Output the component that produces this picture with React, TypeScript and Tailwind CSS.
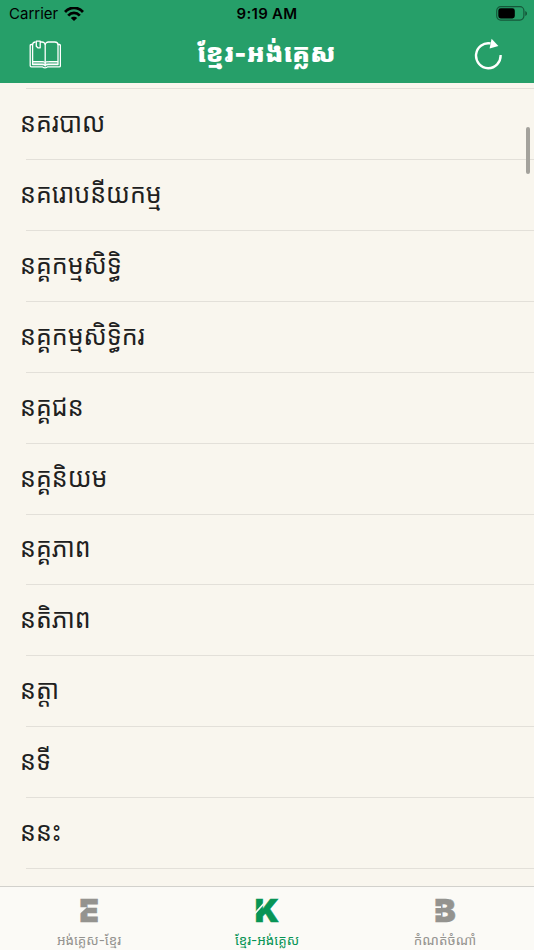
const words = [
    "នគរបាល",
    "នគរោបនីយកម្ម",
    "នគ្គកម្មសិទ្ធិ",
    "នគ្គកម្មសិទ្ធិករ",
    "នគ្គជន",
    "នគ្គនិយម",
    "នគ្គភាព",
    "នតិភាព",
    "នត្តា",
    "នទី",
    "ននះ",
];

function WifiIcon() {
    return (
        <svg className="ml-[6px] h-[15px] w-5" viewBox="0 0 20 15" fill="none" stroke="#000" strokeWidth="2.8">
            <path d="M1 5C6-.5 14-.5 19 5" />
            <path d="M4.2 8.6C7.5 5 12.5 5 15.8 8.6" />
            <path d="M10 14 6.8 10.9C8.4 9.2 11.6 9.2 13.2 10.9Z" fill="#000" stroke="none" />
        </svg>
    );
}

function BatteryIcon() {
    return (
        <svg className="relative -top-px h-[15px] w-8" viewBox="0 0 32 15">
            <rect x="0.7" y="0.7" width="27.2" height="13.4" rx="4" fill="none" stroke="#000" strokeOpacity="0.45" strokeWidth="1.2" />
            <rect x="2.3" y="2.3" width="16.5" height="10.2" rx="2.4" />
            <path d="M29.3 5v5c2.2-.8 2.2-4.2 0-5Z" fillOpacity="0.5" />
        </svg>
    );
}

function BookIcon() {
    return (
        <svg className="relative top-[2px] h-[30px] w-8" viewBox="0 0 32 30" fill="none" stroke="#fff" strokeWidth="1.3" strokeLinejoin="round">
            <path d="M4 21h11l1 2 1-2h12v3.5H4Z" fill="#fff" fillOpacity="0.45" stroke="none" />
            <path d="M3.5 4.5H2.3Q1.2 4.5 1.2 5.7v20Q1.2 26.8 2.3 26.8H13.5c.6 1.3 4.4 1.3 5 0H30.3Q31.4 26.8 31.4 25.7v-20Q31.4 4.5 30.3 4.5H29" />
            <path d="M6.6 2C4.6 2 3.6 3 3.6 5v19.5H13c1.6 0 3.2.5 3.2 1.5V5c0-2-1.7-3-3.2-3h-2" />
            <path d="M16.2 5c0-2 1.7-3 3.2-3h6.4c2 0 3.2 1 3.2 3v19.5H19.4c-1.6 0-3.2.5-3.2 1.5" />
            <path d="M3.6 21.5H13c1.6 0 3.2.5 3.2 1.5 0-1 1.6-1.5 3.2-1.5H29" strokeWidth="1" />
            <path d="M7.3 1.2h3.9v6.6H8.9L7.3 6.2Z" />
        </svg>
    );
}

function ReloadIcon() {
    return (
        <svg className="relative top-px h-8 w-7" viewBox="0 0 28 32" fill="none">
            <path d="M26.6 17A12.3 12.5 0 1 1 16.5 5.4" stroke="#fff" strokeWidth="2.4" />
            <path d="M17.6 .8 15.6 10.5 24.4 8Z" fill="#fff" />
        </svg>
    );
}

const tabs = [
    { letter: "E", label: "អង់គ្លេស-ខ្មែរ", active: false },
    { letter: "K", label: "ខ្មែរ-អង់គ្លេស", active: true },
    { letter: "B", label: "កំណត់ចំណាំ", active: false },
];

// stencil gaps over each tab letter
function LetterCut({ letter }: { letter: string }) {
    return (
        <svg className="absolute inset-0 h-8 w-8" viewBox="0 0 32 32" fill="#fbfaf6">
            {letter === "E" && <path d="M6 12.3H14L6 19.5Z" />}
            {letter === "K" && <path d="M3 18.2 14.3 5.8 15.5 6.8 4.3 19.2Z" />}
            {letter === "B" && <path d="M3 11.3H12v1.7H3ZM3 18.6H12v1.7H3Z" />}
        </svg>
    );
}

export default function App() {
    return (
        <div className="relative flex h-[950px] w-[534px] flex-col overflow-hidden bg-[#f9f6ee] font-['Inter','Noto_Sans_Khmer','Khmer_OS',sans-serif]">
            <header className="h-[83px] shrink-0 bg-[#269f69]">
                <div className="grid h-7 grid-cols-3 items-center px-[9px] text-[15px] text-black">
                    <div className="flex items-center">
                        <span>Carrier</span>
                        <WifiIcon />
                    </div>
                    <div className="text-center font-semibold tracking-[0.3px]">9:19 AM</div>
                    <div className="-mr-[3px] flex justify-end">
                        <BatteryIcon />
                    </div>
                </div>
                <div className="grid h-[50px] grid-cols-3 items-center pr-[32px] pl-[29px] text-white">
                    <BookIcon />
                    <h1 className="relative left-px text-center text-[25.7px] font-black whitespace-nowrap">ខ្មែរ-អង់គ្លេស</h1>
                    <div className="flex justify-end">
                        <ReloadIcon />
                    </div>
                </div>
            </header>

            <main className="min-h-0 flex-1 overflow-hidden pt-[5px]">
                <div className="ml-[26px] h-px bg-[#e3e0d9]" />
                {words.map((word) => (
                    <div key={word} className="flex h-[70.93px] flex-col">
                        <div className="flex flex-1 items-center pl-5 text-[25px] leading-none text-[#202020]">
                            <span className="relative -top-[1.5px] scale-y-110">{word}</span>
                        </div>
                        <div className="ml-[26px] h-px bg-[#e3e0d9]" />
                    </div>
                ))}
            </main>

            <nav className="grid h-16 shrink-0 grid-cols-3 border-t border-[#d2d1cc] bg-[#fbfaf6]">
                {tabs.map((tab) => (
                    <div key={tab.letter} className={tab.active ? "flex flex-col items-center text-[#079455]" : "flex flex-col items-center text-[#94938f]"}>
                        <div className="relative mt-2 h-8 w-8 text-center text-[32px] leading-8 font-black [-webkit-text-stroke:0.6px_currentColor]">
                            {tab.letter}
                            <LetterCut letter={tab.letter} />
                        </div>
                        <div className="mt-[3px] text-[13.4px] leading-5 whitespace-nowrap">{tab.label}</div>
                    </div>
                ))}
            </nav>

            {/* scroll indicator */}
            <div className="absolute top-[127px] right-[4px] h-[47px] w-1 rounded-full bg-[#a4a29c]" />
        </div>
    );
}
